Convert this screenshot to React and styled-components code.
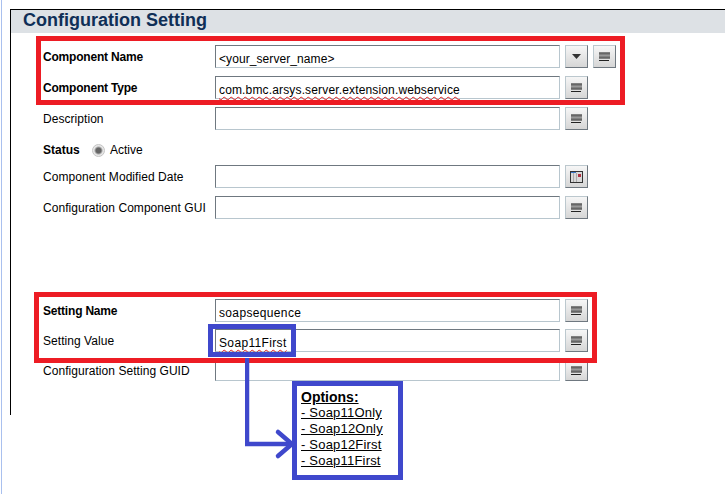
import React from 'react';
import styled, { createGlobalStyle } from 'styled-components';

const GlobalStyle = createGlobalStyle`
  html, body {
    margin: 0;
    padding: 0;
    background: #fff;
  }
  body {
    font-family: "Liberation Sans", Arial, sans-serif;
    color: #000;
  }
`;

const LinesIcon = () => (
  <svg width="11" height="10" viewBox="0 0 11 10">
    <rect x="0" y="0" width="11" height="7" fill="#808080" />
    <rect x="0" y="1" width="11" height="1" fill="#666" />
    <rect x="0" y="3" width="11" height="1" fill="#999" />
    <rect x="0" y="5" width="11" height="1" fill="#666" />
    <rect x="0" y="8" width="10" height="1" fill="#222" />
  </svg>
);

const ArrowIcon = () => (
  <svg width="9" height="5" viewBox="0 0 9 5">
    <polygon points="0,0 9,0 4.5,5" fill="#333" />
  </svg>
);

const CalendarIcon = () => (
  <svg width="13" height="12" viewBox="0 0 13 12">
    <rect x="0" y="0" width="13" height="12" fill="#333" />
    <rect x="1" y="1" width="11" height="10" fill="#d9d9d9" />
    <rect x="1" y="1" width="5" height="1" fill="#3a78c8" />
    <rect x="3" y="2" width="1" height="9" fill="#aaa" />
    <rect x="6" y="2" width="1" height="9" fill="#aaa" />
    <rect x="8" y="3" width="3" height="3" fill="#b03040" />
  </svg>
);

const Row = ({ label, bold, value, squiggle, spacing, icon = 'lines', extra, height, offset }) => (
  <FieldRow $height={height} $offset={offset}>
    <Label $bold={bold}>{label}</Label>
    <Field $spacing={spacing}>{squiggle ? <Squiggle>{value}</Squiggle> : value}</Field>
    <ToolButton>{icon === 'calendar' ? <CalendarIcon /> : icon === 'arrow' ? <ArrowIcon /> : <LinesIcon />}</ToolButton>
    {extra && <ToolButton><LinesIcon /></ToolButton>}
  </FieldRow>
);

export default function App() {
  return (
    <Page>
      <GlobalStyle />
      <Panel>
        <Header>Configuration Setting</Header>
        <Form>
          <Row label="Component Name" bold value="<your_server_name>" spacing={0.08} icon="arrow" extra />
          <Row label="Component Type" bold value="com.bmc.arsys.server.extension.webservice" spacing={0.15} squiggle />
          <Row label="Description" />
          <StatusRow>
            <StatusLabel>Status</StatusLabel>
            <Radio />
            <RadioText>Active</RadioText>
          </StatusRow>
          <Row label="Component Modified Date" icon="calendar" />
          <Row label="Configuration Component GUI" />
        </Form>
        <Form $lower>
          <Row label="Setting Name" bold value="soapsequence" />
          <Row label="Setting Value" value="Soap11First" squiggle offset={-1} />
          <Row label="Configuration Setting GUID" height={20} offset={1} />
        </Form>
      </Panel>

      <RedBox $x={36} $y={36} $w={589} $h={69} />
      <RedBox $x={34} $y={292} $w={563} $h={71} />
      <BlueBox $x={208} $y={324} $w={88} $h={33} />
      <Connector width="60" height="110" viewBox="0 0 60 110">
        <path d="M2 2 V88 H44" fill="none" stroke="#3f48cc" strokeWidth="4.5" />
        <path d="M33 76 L47 88 L33 100" fill="none" stroke="#3f48cc" strokeWidth="4.5" strokeLinecap="round" />
      </Connector>
      <OptionsBox>
        <OptionsTitle>Options:</OptionsTitle>
        <OptionItem>- Soap11Only</OptionItem>
        <OptionItem>- Soap12Only</OptionItem>
        <OptionItem>- Soap12First</OptionItem>
        <OptionItem>- Soap11First</OptionItem>
      </OptionsBox>
    </Page>
  );
}

const Page = styled.div`
  position: relative;
  width: 724px;
  height: 494px;
  margin-left: 1px;
  padding: 9px 0 0 8px;
  box-sizing: border-box;
  border-left: 1px solid #a9c0ee;
  overflow: hidden;
`;

const Panel = styled.div`
  height: 406px;
  box-sizing: border-box;
  border-top: 1px solid #000;
  border-left: 1px solid #000;
`;

const Header = styled.h1`
  margin: 0;
  height: 23px;
  padding-left: 12px;
  background: #dde1e5;
  color: #0f2f57;
  font-size: 18px;
  line-height: 21px;
  font-weight: 700;
`;

const Form = styled.div`
  display: flex;
  flex-direction: column;
  gap: 8px;
  padding-left: 32px;
  margin-top: ${(p) => (p.$lower ? '80px' : '12px')};
`;

const FieldRow = styled.div`
  display: flex;
  align-items: stretch;
  gap: 5px;
  height: ${(p) => p.$height || 23}px;
  margin-top: ${(p) => p.$offset || 0}px;
`;

const Label = styled.div`
  width: 172px;
  margin-right: -5px;
  display: flex;
  align-items: center;
  font-size: 12px;
  font-weight: ${(p) => (p.$bold ? 700 : 400)};
  letter-spacing: ${(p) => (p.$bold ? '-0.2px' : '0.05px')};
  white-space: nowrap;
`;

const Field = styled.div`
  width: 345px;
  box-sizing: border-box;
  padding: 5px 0 0 3px;
  background: #fff;
  border: 1px solid;
  border-color: #6f7880 #b8c6ce #b8c6ce #6f7880;
  font-size: 12px;
  line-height: 16px;
  letter-spacing: ${(p) => p.$spacing ?? 0.35}px;
  white-space: nowrap;
`;

const Squiggle = styled.span`
  text-decoration: underline wavy #e02020 1px;
  text-underline-offset: 2px;
`;

const ToolButton = styled.div`
  width: 23px;
  box-sizing: border-box;
  display: flex;
  align-items: center;
  justify-content: center;
  background: linear-gradient(#f6f6f6, #d6d6d6);
  border: 1px solid;
  border-color: #bcc8ce #6f7880 #6f7880 #bcc8ce;
`;

const StatusRow = styled.div`
  display: flex;
  align-items: flex-end;
  height: 20px;
  margin-bottom: -1px;
  font-size: 12px;
  line-height: 15px;
`;

const StatusLabel = styled.span`
  font-weight: 700;
  width: 49px;
`;

const Radio = styled.span`
  width: 13px;
  height: 13px;
  box-sizing: border-box;
  margin: 0 5px 1px 0;
  border-radius: 50%;
  border: 1px solid #c4c4c4;
  background: radial-gradient(circle, #666 0 2.5px, #a8a8a8 3.5px, #e6e6e6 4.5px, #f2f2f2 100%);
`;

const RadioText = styled.span``;

const RedBox = styled.div`
  position: absolute;
  left: ${(p) => p.$x - 2}px;
  top: ${(p) => p.$y}px;
  width: ${(p) => p.$w}px;
  height: ${(p) => p.$h}px;
  box-sizing: border-box;
  border: 5px solid #ed1c24;
`;

const BlueBox = styled(RedBox)`
  border-color: #3f48cc;
`;

const Connector = styled.svg`
  position: absolute;
  left: 243px;
  top: 356px;
`;

const OptionsBox = styled.div`
  position: absolute;
  left: 290px;
  top: 381px;
  width: 111px;
  height: 99px;
  box-sizing: border-box;
  border: 5px solid #3f48cc;
  padding: 3px 0 0 4px;
  background: #fff;
`;

const OptionsTitle = styled.div`
  font-size: 14px;
  line-height: 16px;
  font-weight: 700;
  text-decoration: underline;
`;

const OptionItem = styled.div`
  font-size: 13px;
  line-height: 16px;
  letter-spacing: 0.2px;
  text-decoration: underline;
  white-space: nowrap;
`;
